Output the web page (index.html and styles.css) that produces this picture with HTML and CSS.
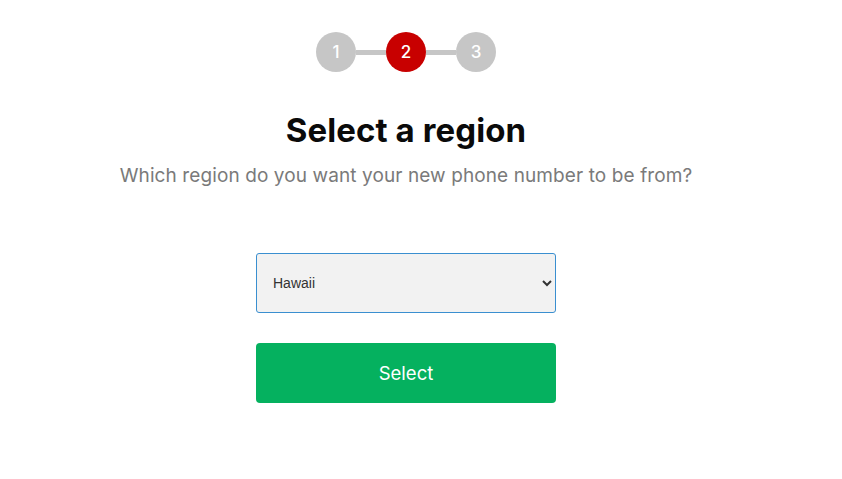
FILE: index.html
```html
<!DOCTYPE html>
<html lang="en">
<head>
<meta charset="utf-8">
<title>Select a region</title>
<link rel="stylesheet" href="styles.css">
</head>
<body>
<div class="page">
  <div class="steps">
    <span class="step">1</span>
    <span class="bar"></span>
    <span class="step active">2</span>
    <span class="bar"></span>
    <span class="step">3</span>
  </div>
  <h1 class="title">Select a region</h1>
  <p class="subtitle">Which region do you want your new phone number to be from?</p>
  <form class="form">
    <select class="region">
      <option>Hawaii</option>
      <option>Alaska</option>
      <option>California</option>
    </select>
    <button type="button" class="submit">Select</button>
  </form>
</div>
</body>
</html>
```
FILE: styles.css
```css
* { box-sizing: border-box; }
html, body { margin: 0; padding: 0; background: #fff; }
body { font-family: "Inter", "Open Sans", sans-serif; }
.page {
  width: 812px;
  display: flex;
  flex-direction: column;
  align-items: center;
  padding-top: 32px;
}
.steps {
  display: flex;
  align-items: center;
}
.step {
  width: 40px;
  height: 40px;
  border-radius: 50%;
  background: #c6c6c6;
  color: #fff;
  font-size: 17px;
  font-weight: 500;
  display: flex;
  align-items: center;
  justify-content: center;
}
.step.active { background: #c80000; }
.bar {
  width: 30px;
  height: 5px;
  background: #c6c6c6;
}
.title {
  margin: 38px 0 0;
  font-size: 33px;
  line-height: 40px;
  font-weight: 700;
  color: #0a0a0a;
  letter-spacing: 0.1px;
}
.subtitle {
  margin: 13px 0 0;
  font-size: 19px;
  line-height: 26px;
  color: #7a7a7a;
  font-weight: 400;
  letter-spacing: 0.1px;
}
.form {
  margin-top: 64px;
  display: flex;
  flex-direction: column;
  gap: 30px;
  width: 300px;
}
.region {
  width: 300px;
  height: 60px;
  background: #f2f2f2;
  border: 1px solid #3a8fd0;
  border-radius: 3px;
  padding: 0 8px 0 12px;
  font-family: "Liberation Sans", Arial, sans-serif;
  font-size: 14px;
  color: #333;
}
.submit {
  width: 300px;
  height: 60px;
  background: #05b15f;
  border: none;
  border-radius: 4px;
  color: #fff;
  font-family: "Inter", sans-serif;
  font-size: 18.5px;
  font-weight: 400;
}
```
